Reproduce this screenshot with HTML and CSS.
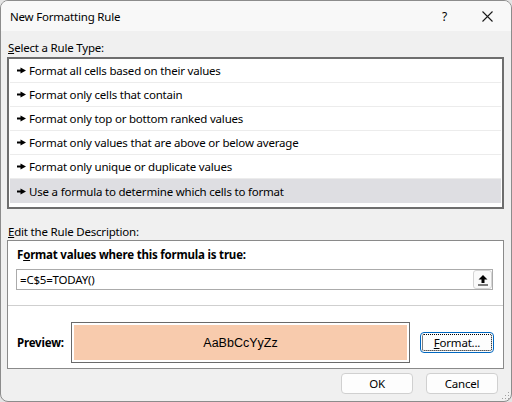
FILE: index.html
```html
<!DOCTYPE html>
<html>
<head>
<meta charset="utf-8">
<link rel="stylesheet" href="styles.css">
</head>
<body>
<div class="dialog">
  <div class="titlebar">
    <span class="title">New Formatting Rule</span>
    <span class="help">?</span>
    <svg class="close" width="11" height="11" viewBox="0 0 11 11"><path d="M0.5 0.5 L10.5 10.5 M10.5 0.5 L0.5 10.5" stroke="#1a1a1a" stroke-width="1.1" fill="none"/></svg>
  </div>
  <div class="content">
    <div class="label first"><u>S</u>elect a Rule Type:</div>
    <div class="list">
      <div class="item"><svg class="arr" width="9" height="7" viewBox="0 0 9 7"><rect x="0" y="2.5" width="4" height="2" fill="#000"/><path d="M3.5 0.5 L9 3.5 L3.5 6.5 Z" fill="#000"/></svg>Format all cells based on their values</div>
      <div class="item"><svg class="arr" width="9" height="7" viewBox="0 0 9 7"><rect x="0" y="2.5" width="4" height="2" fill="#000"/><path d="M3.5 0.5 L9 3.5 L3.5 6.5 Z" fill="#000"/></svg>Format only cells that contain</div>
      <div class="item"><svg class="arr" width="9" height="7" viewBox="0 0 9 7"><rect x="0" y="2.5" width="4" height="2" fill="#000"/><path d="M3.5 0.5 L9 3.5 L3.5 6.5 Z" fill="#000"/></svg>Format only top or bottom ranked values</div>
      <div class="item"><svg class="arr" width="9" height="7" viewBox="0 0 9 7"><rect x="0" y="2.5" width="4" height="2" fill="#000"/><path d="M3.5 0.5 L9 3.5 L3.5 6.5 Z" fill="#000"/></svg>Format only values that are above or below average</div>
      <div class="item"><svg class="arr" width="9" height="7" viewBox="0 0 9 7"><rect x="0" y="2.5" width="4" height="2" fill="#000"/><path d="M3.5 0.5 L9 3.5 L3.5 6.5 Z" fill="#000"/></svg>Format only unique or duplicate values</div>
      <div class="item selected"><svg class="arr" width="9" height="7" viewBox="0 0 9 7"><rect x="0" y="2.5" width="4" height="2" fill="#000"/><path d="M3.5 0.5 L9 3.5 L3.5 6.5 Z" fill="#000"/></svg>Use a formula to determine which cells to format</div>
    </div>
    <div class="label second"><u>E</u>dit the Rule Description:</div>
    <div class="desc">
      <div class="desc-label">F<u>o</u>rmat values where this formula is true:</div>
      <div class="input">
        <span class="input-text">=C$5=TODAY()</span>
        <span class="collapse"><svg width="10" height="12" viewBox="0 0 10 12"><path d="M5 1 L9.5 5.5 H6.5 V9 H3.5 V5.5 H0.5 Z" fill="#000"/><path d="M0 11 H10" stroke="#000" stroke-width="1"/></svg></span>
      </div>
      <div class="sep"></div>
      <div class="preview-row">
        <span class="preview-label">Preview:</span>
        <div class="preview-box"><div class="preview-fill">AaBbCcYyZz</div></div>
        <button class="btn format"><span class="focus"><u>F</u>ormat...</span></button>
      </div>
    </div>
    <div class="footer">
      <button class="btn">OK</button>
      <button class="btn">Cancel</button>
    </div>
  </div>
  <svg class="grip" width="8" height="8" viewBox="0 0 8 8" fill="#a0a0a0"><rect x="6" y="0" width="1" height="1"/><rect x="3" y="3" width="1" height="1"/><rect x="6" y="3" width="1" height="1"/><rect x="0" y="6" width="1" height="1"/><rect x="3" y="6" width="1" height="1"/><rect x="6" y="6" width="1" height="1"/></svg>
</div>
</body>
</html>
```
FILE: styles.css
```css
html, body {
  margin: 0;
  padding: 0;
  background: #e4e4e4;
}
.dialog {
  position: relative;
  width: 512px;
  height: 402px;
  box-sizing: border-box;
  border: 1px solid #8c8c8c;
  border-radius: 8px;
  overflow: hidden;
  background: #f0f0f0;
  font-family: "Noto Sans", "Open Sans", sans-serif;
  font-size: 11.5px;
  letter-spacing: -0.2px;
  color: #000;
}
.titlebar {
  height: 30px;
  background: #f8f8f8;
  display: flex;
  align-items: center;
  padding-left: 9px;
}
.title {
  flex: 1;
}
.help {
  margin-right: 35px;
  font-size: 12px;
}
.close {
  margin-right: 18px;
}
.content {
  padding: 0 7px 0 6px;
}
.label {
  height: 16px;
  line-height: 16px;
  padding-left: 1px;
}
.label.first {
  margin-top: 9px;
  margin-bottom: 1px;
}
.label.second {
  margin-top: 15px;
}
.list {
  border: 2px solid #6e6e6e;
  background: #fff;
  padding: 0 1px 2px 1px;
  height: 146px;
}
.item {
  height: 24px;
  box-sizing: border-box;
  display: flex;
  align-items: center;
  padding-left: 7px;
  border-bottom: 1px solid #ececec;
}
.item.selected {
  background: #dedee2;
  border-bottom: none;
}
.arr {
  margin-right: 3px;
  flex: none;
}
.desc {
  border: 1px solid #8a8a8a;
  background: #fff;
  height: 127px;
  display: flex;
  flex-direction: column;
}
.desc-label {
  font-weight: bold;
  height: 16px;
  line-height: 16px;
  margin: 6px 0 0 9px;
}
.input {
  margin: 6px 10px 0 8px;
  height: 21px;
  box-sizing: border-box;
  border: 1px solid #ababab;
  display: flex;
  align-items: center;
  padding-left: 3px;
}
.input-text {
  flex: 1;
}
.collapse {
  width: 19px;
  height: 19px;
  box-sizing: border-box;
  border: 1px solid #d4d4d4;
  border-radius: 3px;
  display: flex;
  align-items: center;
  justify-content: center;
  background: #fafafa;
}
.sep {
  margin-top: 15px;
  height: 1px;
  background: #cfcfcf;
}
.preview-row {
  margin-top: 16px;
  display: flex;
  align-items: center;
  padding-left: 9px;
}
.preview-label {
  font-weight: bold;
  width: 54px;
}
.preview-box {
  width: 339px;
  height: 41px;
  box-sizing: border-box;
  border: 1px solid #6a6a6a;
  padding: 2px;
}
.preview-fill {
  height: 100%;
  background: #f8cbad;
  display: flex;
  align-items: center;
  justify-content: center;
  font-family: "Liberation Sans", sans-serif;
  font-size: 12.5px;
  letter-spacing: 0;
}
.btn {
  font-family: "Noto Sans", "Open Sans", sans-serif;
  font-size: 11.5px;
  letter-spacing: -0.2px;
  color: #000;
  width: 72px;
  height: 21px;
  box-sizing: border-box;
  border: 1px solid #d0d0d0;
  border-radius: 4px;
  background: #fdfdfd;
  padding: 0;
  display: flex;
  align-items: center;
  justify-content: center;
}
.btn.format {
  width: 74px;
  margin-left: 10px;
  border: 1px solid #0067c0;
  padding: 1px;
}
.focus {
  flex: 1;
  align-self: stretch;
  border: 1px dotted #000;
  border-radius: 2px;
  display: flex;
  align-items: center;
  justify-content: center;
}
.footer {
  display: flex;
  justify-content: flex-end;
  gap: 13px;
  margin-top: 4px;
  padding-right: 6px;
}
.grip {
  position: absolute;
  right: 1px;
  bottom: 1px;
}
```
